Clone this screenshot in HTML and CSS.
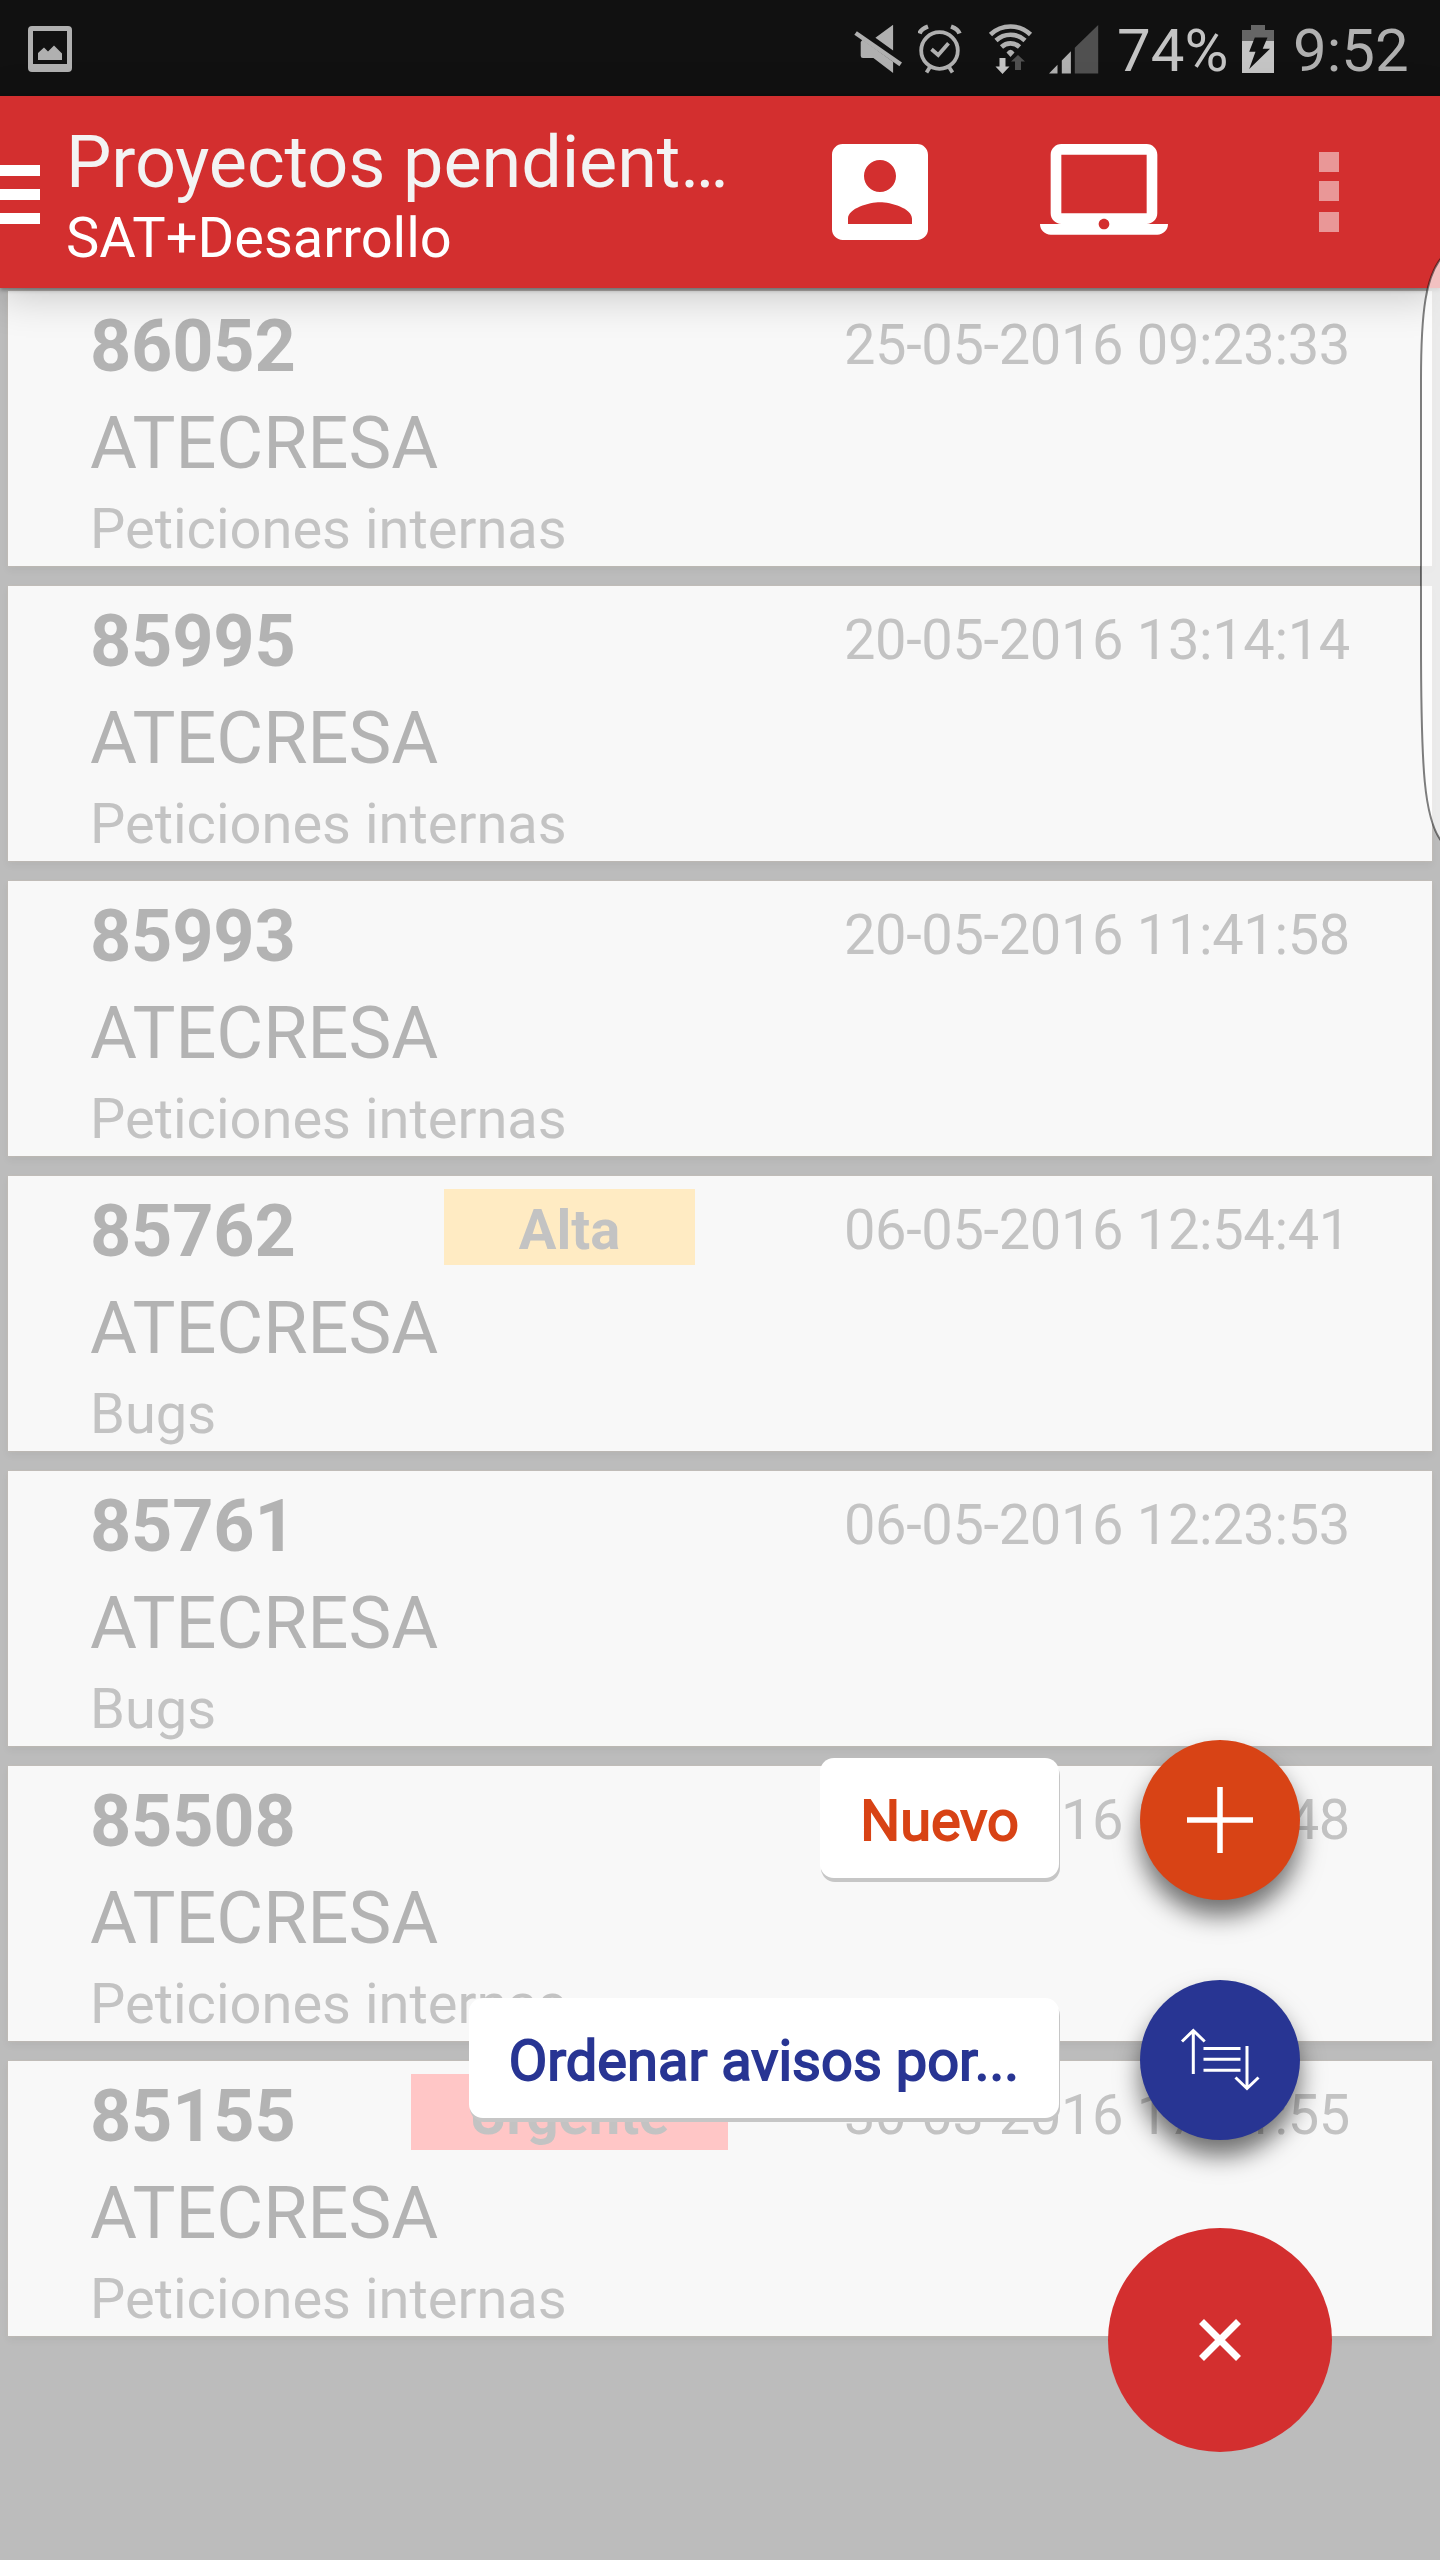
FILE: index.html
```html
<!DOCTYPE html>
<html lang="es">

<head>
  <meta charset="UTF-8">
  <meta name="viewport" content="width=device-width, initial-scale=1.0">
  <title>Proyectos pendientes</title>
  <link rel="stylesheet" href="styles.css">
</head>

<body>
  <div class="screen">
    <div class="status-bar">
      <svg class="icon-photo" width="44" height="47" viewBox="0 0 44 47">
        <path fill="#b0b0b0" fill-rule="evenodd" d="M4 0h36a4 4 0 0 1 4 4v38a4 4 0 0 1-4 4H4a4 4 0 0 1-4-4V4a4 4 0 0 1 4-4zM5 5v33h34V5z" />
        <path fill="#b0b0b0" d="M10 34v-7l6-5.500 4 4 6-6 8 8V34z" />
      </svg>
      <div class="status-icons">
        <svg width="48" height="50" viewBox="854 24 48 50" fill="#b0b0b0">
          <path d="M875.400 37.700 893.100 24.700V50.500zM862.500 39.800 893.100 61.700V73L873.400 58H863q-2.300 0-2.300-2.300V42z" />
          <path d="M855.600 33 900.700 64.300" stroke="#b0b0b0" stroke-width="4.500" />
        </svg>
        <svg width="44" height="50" viewBox="918 24 44 50" fill="none" stroke="#b0b0b0" stroke-width="3.800">
          <circle cx="939.500" cy="50.500" r="18.300" />
          <path d="M931.500 49.300 938.200 55 948.500 43.300M930 67 926.500 72.500M949 67 952.500 72.500" />
          <path d="M919.500 33.500Q921 29 928 26.500M959.500 33.500Q958 29 951 26.500" stroke-width="4.500" />
        </svg>
        <svg width="44" height="51" viewBox="989 24 44 51" fill="none" stroke="#b0b0b0" stroke-width="4.600">
          <path d="M990.500 34.500A29 29 0 0 1 1030.500 34.500M996 40.500A21 21 0 0 1 1025 40.500M1001.500 47A13 13 0 0 1 1019.500 47" />
          <path fill="#b0b0b0" stroke="none" d="M1006.500 52.500Q1010.500 47 1014.500 52.500L1010.500 57z" />
          <path fill="#c4c4c4" stroke="none" d="M999.500 58h6v8.500h4L1002.500 74 995.500 66.500h4z" />
          <path fill="#505050" stroke="none" d="M1015 70h6v-8.500h4L1018 55 1011 61.500h4z" />
        </svg>
        <svg width="50" height="49" viewBox="1048 24.500 50 49">
          <path fill="#b0b0b0" d="M1048 73 1056.500 64.300V73zM1060.800 73V60L1069.900 50.700V73z" />
          <path fill="#505050" d="M1073.800 73V47.300L1097.200 24.500V73z" />
        </svg>
        <span class="battery-text">74%</span>
        <svg width="32" height="48" viewBox="1241 25 32 48">
          <path fill="#666" d="M1250 25h14v5h9v12h-32V30h9z" />
          <path fill="#c4c4c4" d="M1241 41h32v32h-32z" />
          <path fill="#111" d="M1253.800 37.500H1266.500L1261.700 48.700H1269L1248.200 69 1254.500 51.700H1248.200z" />
        </svg>
        <span class="clock">9:52</span>
      </div>
    </div>

    <header class="app-bar">
      <div class="menu">
        <span></span>
        <span></span>
        <span></span>
      </div>
      <div class="titles">
        <h1 class="title">Proyectos pendient…</h1>
        <p class="subtitle">SAT+Desarrollo</p>
      </div>
      <div class="actions">
        <svg width="128" height="128" viewBox="0 0 24 24" fill="#fff">
          <path d="M3 5v14c0 1.100.89 2 2 2h14c1.100 0 2-.9 2-2V5c0-1.100-.9-2-2-2H5c-1.110 0-2 .9-2 2zm12 4c0 1.660-1.340 3-3 3s-3-1.340-3-3 1.340-3 3-3 3 1.340 3 3zm-9 8c0-2 4-3.100 6-3.100s6 1.100 6 3.100v1H6v-1z" />
        </svg>
        <svg width="128" height="128" viewBox="0 0 24 24" fill="#fff">
          <path d="M20 18c1.100 0 1.990-.9 1.990-2L22 5c0-1.100-.9-2-2-2H4c-1.100 0-2 .9-2 2v11c0 1.100.9 2 2 2H0c0 1.100.9 2 2 2h20c1.100 0 2-.9 2-2h-4zM4 5h16v11H4V5zm8 14c-.55 0-1-.45-1-1s.45-1 1-1 1 .45 1 1-.45 1-1 1z" />
        </svg>
        <svg class="icon-more" width="20" height="80" viewBox="0 0 20 80" fill="#fff" fill-opacity=".5">
          <path d="M0 0h20v20H0zM0 29h20v20H0zM0 60h20v20H0z" />
        </svg>
      </div>
    </header>

    <main class="list">
      <article class="card">
        <div class="card-top">
          <strong class="number">86052</strong>
          <span class="date">25-05-2016 09:23:33</span>
        </div>
        <p class="client">ATECRESA</p>
        <p class="type">Peticiones internas</p>
      </article>

      <article class="card">
        <div class="card-top">
          <strong class="number">85995</strong>
          <span class="date">20-05-2016 13:14:14</span>
        </div>
        <p class="client">ATECRESA</p>
        <p class="type">Peticiones internas</p>
      </article>

      <article class="card">
        <div class="card-top">
          <strong class="number">85993</strong>
          <span class="date">20-05-2016 11:41:58</span>
        </div>
        <p class="client">ATECRESA</p>
        <p class="type">Peticiones internas</p>
      </article>

      <article class="card">
        <div class="card-top">
          <strong class="number">85762</strong>
          <span class="badge badge-high">Alta</span>
          <span class="date">06-05-2016 12:54:41</span>
        </div>
        <p class="client">ATECRESA</p>
        <p class="type">Bugs</p>
      </article>

      <article class="card">
        <div class="card-top">
          <strong class="number">85761</strong>
          <span class="date">06-05-2016 12:23:53</span>
        </div>
        <p class="client">ATECRESA</p>
        <p class="type">Bugs</p>
      </article>

      <article class="card">
        <div class="card-top">
          <strong class="number">85508</strong>
          <span class="date">20-04-2016 10:05:48</span>
        </div>
        <p class="client">ATECRESA</p>
        <p class="type">Peticiones internas</p>
      </article>

      <article class="card">
        <div class="card-top">
          <strong class="number">85155</strong>
          <span class="badge badge-urgent">Urgente</span>
          <span class="date">30-03-2016 17:21:55</span>
        </div>
        <p class="client">ATECRESA</p>
        <p class="type">Peticiones internas</p>
      </article>
    </main>

    <!-- floating menu -->
    <div class="fab-menu">
      <div class="fab-row">
        <span class="fab-label label-new">Nuevo</span>
        <button class="fab fab-new">
          <svg width="66" height="66" viewBox="0 0 66 66" stroke="#fff" stroke-width="5.500">
            <path d="M0 33H66M33 0V66" />
          </svg>
        </button>
      </div>
      <div class="fab-row">
        <span class="fab-label label-sort">Ordenar avisos por...</span>
        <button class="fab fab-sort">
          <svg width="80" height="64" viewBox="1180 2028 80 64" fill="none" stroke="#fff" stroke-width="3">
            <path d="M1193.300 2074V2030M1182 2041.500 1193.300 2030.500 1204.700 2041.500M1247 2046V2089M1235.500 2077.500 1247 2088.500 1258.500 2077.500" />
            <path d="M1203.500 2048.500H1240.500M1203.500 2059.300H1240.500M1203.500 2070.200H1240.500" />
          </svg>
        </button>
      </div>
      <button class="fab fab-main">
        <svg width="42" height="42" viewBox="0 0 42 42" stroke="#fff" stroke-width="7">
          <path d="M2.500 2.500 39.500 39.500M39.500 2.500 2.500 39.500" />
        </svg>
      </button>
    </div>

    <!-- edge panel handle -->
    <svg class="edge-handle" width="24" height="590" viewBox="1416 256 24 590">
      <path fill="#fff" fill-opacity=".7" stroke="#000" stroke-opacity=".5" stroke-width="2" d="M1442 257C1426 276 1421 310 1421 380V640C1421 770 1424 820 1442 842" />
    </svg>
  </div>
</body>

</html>
```
FILE: styles.css
```css
* {
  margin: 0;
  padding: 0;
  box-sizing: border-box;
}

body {
  font-family: Roboto, sans-serif;
  background-color: #bcbcbc;
}

svg {
  display: block;
  flex-shrink: 0;
}

.screen {
  position: relative;
  width: 1440px;
  height: 2560px;
  overflow: hidden;
}

.status-bar {
  height: 96px;
  padding: 2px 29px 0 28px;
  background-color: #111;
  display: flex;
  align-items: center;
  justify-content: space-between;
}

.status-icons {
  display: flex;
  align-items: center;
  gap: 16px;
}

.status-icons svg:nth-of-type(2) {
  margin-right: 11px;
}

.battery-text,
.clock {
  padding-top: 4px;
  font-size: 60px;
  line-height: 70px;
}

.battery-text {
  width: 110px;
  margin-left: 2px;
  margin-right: -1px;
  color: #c4c4c4;
}

.clock {
  width: 118px;
  margin-left: 3px;
  color: #b0b0b0;
}

.app-bar {
  position: relative;
  z-index: 1;
  height: 192px;
  background-color: #d32f2f;
  color: #fff;
  display: flex;
  align-items: center;
  box-shadow: 0 2px 4px rgba(0, 0, 0, 0.35), 0 8px 40px rgba(0, 0, 0, 0.2);
}

.menu {
  width: 66px;
  padding-top: 5px;
  display: flex;
  flex-direction: column;
  gap: 13px;
}

.menu span {
  width: 40px;
  height: 11px;
  background-color: #fff;
}

.titles {
  width: 750px;
  padding-top: 8px;
  white-space: nowrap;
}

.title {
  font-size: 72px;
  font-weight: 400;
  line-height: 84px;
  letter-spacing: -0.1px;
  color: #f3f3f3;
}

.subtitle {
  font-size: 56px;
  line-height: 66px;
}

.actions {
  display: flex;
  align-items: center;
  gap: 96px;
}

.icon-more {
  margin-left: 55px;
}

.list {
  padding: 3px 8px 0;
  display: flex;
  flex-direction: column;
  gap: 20px;
}

.card {
  height: 275px;
  padding: 13px 40px 0 82px;
  background-color: #f8f8f8;
  color: #b3b3b3;
  box-shadow: 0 0 2px #c9bfb2, 0 4px 8px rgba(0, 0, 0, 0.05);
}

.card-top {
  height: 84px;
  display: grid;
  grid-template-columns: 205px 549px 1fr;
}

.number,
.client {
  font-size: 72px;
  line-height: 84px;
}

.number {
  padding-top: 1px;
  letter-spacing: -0.2px;
}

.client {
  margin-top: 14px;
}

.type {
  margin-top: 10px;
}

.type,
.date {
  font-size: 56px;
  line-height: 66px;
  color: #c3c3c3;
}

.date {
  grid-column: 3;
  padding-top: 8px;
  letter-spacing: -0.35px;
  white-space: nowrap;
}

.badge {
  justify-self: center;
  height: 76px;
  padding: 8px 75px 2px;
  font-size: 56px;
  font-weight: 700;
  line-height: 66px;
  color: #c3c3c3;
}

.badge-high {
  background-color: #ffebc3;
}

.badge-urgent {
  padding: 8px 59px 2px;
  background-color: #ffc6c6;
}

.fab-menu {
  position: absolute;
  right: 108px;
  bottom: 108px;
  z-index: 2;
  display: flex;
  flex-direction: column;
  align-items: flex-end;
}

.fab-row {
  display: flex;
  align-items: center;
  gap: 81px;
  margin: 0 32px 80px 0;
}

.fab-row:nth-child(2) {
  margin-bottom: 88px;
}

/* regular weight thickened with a thin stroke */
.fab-label {
  height: 120px;
  margin-top: -4px;
  padding: 0 40px;
  border-radius: 14px;
  background-color: #fff;
  box-shadow: 1px 4px 0 #c6c6c6;
  font-size: 56px;
  line-height: 127px;
  -webkit-text-stroke: 1.8px currentColor;
}

.label-new {
  color: #d84315;
}

.label-sort {
  color: #283593;
}

.fab {
  width: 160px;
  height: 160px;
  border: none;
  border-radius: 50%;
  display: flex;
  align-items: center;
  justify-content: center;
  box-shadow: 0 16px 24px rgba(0, 0, 0, 0.55);
}

.fab-new {
  background-color: #d84315;
}

.fab-sort {
  background-color: #283593;
}

.fab-main {
  width: 224px;
  height: 224px;
  background-color: #d32f2f;
  box-shadow: none;
}

.edge-handle {
  position: absolute;
  top: 256px;
  right: 0;
  z-index: 3;
}
```
